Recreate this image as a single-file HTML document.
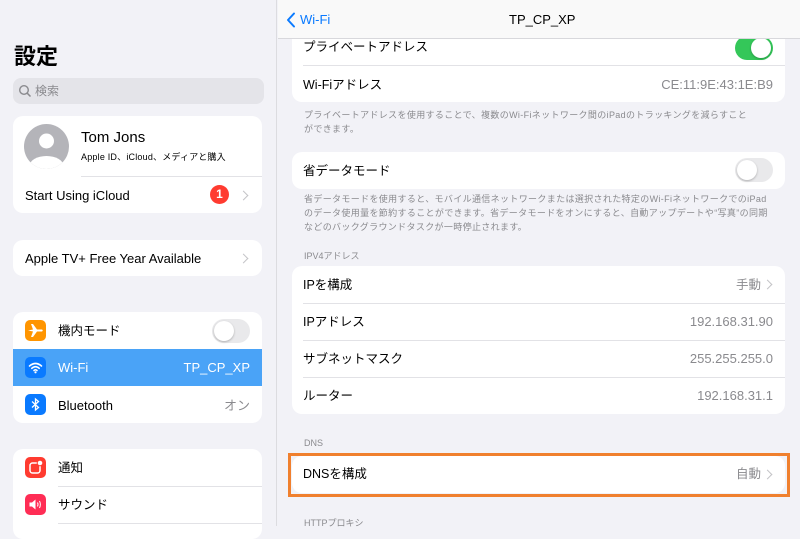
<!DOCTYPE html>
<html><head><meta charset="utf-8">
<style>
*{margin:0;padding:0;box-sizing:border-box}
body{width:800px;height:526px;overflow:hidden;background:#f2f2f7;font-family:"Liberation Sans","Noto Sans CJK JP",sans-serif;color:#000;position:relative}
.a{position:absolute}
.card{position:absolute;background:#fff;border-radius:10px;overflow:hidden}
.t{position:absolute;font-size:13px;line-height:16px;white-space:nowrap}
.g{color:#8a8a8e}
.sep{position:absolute;height:1px;background:#e2e2e6}
.chev{position:absolute;width:7px;height:7px;border-right:1.5px solid #c4c4c7;border-top:1.5px solid #c4c4c7;transform:rotate(45deg)}
.note{position:absolute;font-size:9px;line-height:14px;color:#8a8a8e;left:304px;width:450px;letter-spacing:.35px}
.hdr{position:absolute;font-size:9px;color:#8a8a8e;left:304px}
.ico{position:absolute;left:25px;width:21px;height:21px;border-radius:5px}
.tog{position:absolute;width:38px;height:24px;border-radius:12px;background:#e9e9eb}
.tog i{position:absolute;top:2px;width:20px;height:20px;border-radius:50%;background:#fff;box-shadow:0 1px 2px rgba(0,0,0,.25)}
</style></head><body>
<div class="a" style="left:0;top:0;width:277px;height:526px;background:#f2f2f7;border-right:1px solid #dcdce0"></div>
<div class="t" style="left:14px;top:44px;font-size:22px;line-height:26px;font-weight:bold">設定</div>
<div class="a" style="left:13px;top:78px;width:251px;height:26px;border-radius:8px;background:#e4e4e9"></div>
<svg class="a" style="left:18px;top:84px" width="14" height="14" viewBox="0 0 14 14"><circle cx="6" cy="6" r="4.3" fill="none" stroke="#8a8a8e" stroke-width="1.4"/><path d="M9.2 9.2 L12.5 12.5" stroke="#8a8a8e" stroke-width="1.5"/></svg>
<div class="t g" style="left:35px;top:83px;font-size:12px">検索</div>

<div class="card" style="left:13px;top:116px;width:249px;height:97px"></div>
<svg class="a" style="left:24px;top:124px" width="45" height="45" viewBox="0 0 45 45"><defs><clipPath id="c"><circle cx="22.5" cy="22.5" r="22.5"/></clipPath></defs><circle cx="22.5" cy="22.5" r="22.5" fill="#b4b4b9"/><circle cx="22.5" cy="17" r="7.5" fill="#fff"/><ellipse cx="22.5" cy="42" rx="17" ry="10" fill="#fff" clip-path="url(#c)"/></svg>
<div class="t" style="left:81px;top:129px;font-size:15px;line-height:17px">Tom Jons</div>
<div class="t" style="left:81px;top:151px;font-size:9px;line-height:12px;letter-spacing:.2px">Apple ID、iCloud、メディアと購入</div>
<div class="sep" style="left:81px;top:176px;width:181px"></div>
<div class="t" style="left:25px;top:188px">Start Using iCloud</div>
<div class="a" style="left:210px;top:185px;width:19px;height:19px;border-radius:50%;background:#ff3b30;color:#fff;font-size:12px;font-weight:bold;text-align:center;line-height:19px">1</div>
<div class="chev" style="left:240px;top:192px"></div>

<div class="card" style="left:13px;top:240px;width:249px;height:36px"></div>
<div class="t" style="left:25px;top:251px">Apple TV+ Free Year Available</div>
<div class="chev" style="left:240px;top:255px"></div>

<div class="card" style="left:13px;top:312px;width:249px;height:111px"></div>
<div class="a" style="left:13px;top:349px;width:249px;height:37px;background:#4aa3f7"></div>
<div class="ico" style="top:320px;background:#ff9500"><svg width="21" height="21" viewBox="0 0 21 21"><path d="M3 10.5 L8 9.5 L6 4 L8 4 L12 9.5 L17 9.5 Q18.5 10.5 17 11.5 L12 11.5 L8 17 L6 17 L8 11.5 L3 10.5Z" fill="#fff"/></svg></div>
<div class="t" style="left:58px;top:323px;font-size:12.5px">機内モード</div>
<div class="tog" style="left:212px;top:319px"><i style="left:2px"></i></div>
<div class="ico" style="top:357px;background:#0a7aff"><svg width="21" height="21" viewBox="0 0 21 21"><path d="M4.5 9 Q10.5 4 16.5 9 M6.8 11.3 Q10.5 8 14.2 11.3 M9 13.5 Q10.5 12.2 12 13.5" fill="none" stroke="#fff" stroke-width="1.6" stroke-linecap="round"/><circle cx="10.5" cy="15.3" r="1.1" fill="#fff"/></svg></div>
<div class="t" style="left:58px;top:360px;color:#fff">Wi-Fi</div>
<div class="t" style="right:550px;top:360px;color:#fff">TP_CP_XP</div>
<div class="ico" style="top:394px;background:#0a7aff"><svg width="21" height="21" viewBox="0 0 21 21"><path d="M7 7.5 L13.5 13.5 L10.5 16 L10.5 5 L13.5 7.5 L7 13.5" fill="none" stroke="#fff" stroke-width="1.3"/></svg></div>
<div class="t" style="left:58px;top:398px">Bluetooth</div>
<div class="t g" style="right:550px;top:398px">オン</div>

<div class="card" style="left:13px;top:449px;width:249px;height:90px"></div>
<div class="ico" style="top:457px;background:#ff3b30"><svg width="21" height="21" viewBox="0 0 21 21"><rect x="5" y="6" width="10" height="10" rx="2.5" fill="none" stroke="#fff" stroke-width="1.5"/><circle cx="15" cy="6" r="2.8" fill="#fff" stroke="#ff3b30" stroke-width="1"/></svg></div>
<div class="t" style="left:58px;top:460px;font-size:12.5px">通知</div>
<div class="sep" style="left:58px;top:486px;width:204px"></div>
<div class="ico" style="top:494px;background:#ff2d55"><svg width="21" height="21" viewBox="0 0 21 21"><path d="M4.5 8.5 H7 L10.5 5.5 V15.5 L7 12.5 H4.5Z" fill="#fff"/><path d="M12.5 8.5 Q13.5 10.5 12.5 12.5 M14.5 7 Q16.2 10.5 14.5 14" fill="none" stroke="#fff" stroke-width="1"/></svg></div>
<div class="t" style="left:58px;top:497px;font-size:12.5px">サウンド</div>
<div class="sep" style="left:58px;top:523px;width:204px"></div>

<div class="card" style="left:292px;top:20px;width:493px;height:82px"></div>
<div class="t" style="left:303px;top:39px;font-size:12.5px">プライベートアドレス</div>
<div class="tog" style="left:735px;top:36px;background:#34c759"><i style="left:16px"></i></div>
<div class="sep" style="left:303px;top:65px;width:482px"></div>
<div class="t" style="left:303px;top:77px;font-size:12.5px">Wi-Fiアドレス</div>
<div class="t g" style="right:27px;top:77px">CE:11:9E:43:1E:B9</div>
<div class="note" style="top:108px">プライベートアドレスを使用することで、複数のWi-Fiネットワーク間のiPadのトラッキングを減らすことができます。</div>

<div class="card" style="left:292px;top:152px;width:493px;height:37px"></div>
<div class="t" style="left:303px;top:163px;font-size:12.5px">省データモード</div>
<div class="tog" style="left:735px;top:158px"><i style="left:2px"></i></div>
<div class="note" style="top:192px;width:470px">省データモードを使用すると、モバイル通信ネットワークまたは選択された特定のWi-FiネットワークでのiPadのデータ使用量を節約することができます。省データモードをオンにすると、自動アップデートや“写真”の同期などのバックグラウンドタスクが一時停止されます。</div>

<div class="hdr" style="top:249px">IPV4アドレス</div>
<div class="card" style="left:292px;top:266px;width:493px;height:148px"></div>
<div class="t" style="left:303px;top:277px;font-size:12.5px">IPを構成</div>
<div class="t g" style="left:736px;top:277px;font-size:12.5px">手動</div>
<div class="chev" style="left:764px;top:281px"></div>
<div class="sep" style="left:303px;top:303px;width:482px"></div>
<div class="t" style="left:303px;top:314px;font-size:12.5px">IPアドレス</div>
<div class="t g" style="right:27px;top:314px">192.168.31.90</div>
<div class="sep" style="left:303px;top:340px;width:482px"></div>
<div class="t" style="left:303px;top:351px;font-size:12.5px">サブネットマスク</div>
<div class="t g" style="right:27px;top:351px">255.255.255.0</div>
<div class="sep" style="left:303px;top:377px;width:482px"></div>
<div class="t" style="left:303px;top:388px;font-size:12.5px">ルーター</div>
<div class="t g" style="right:27px;top:388px">192.168.31.1</div>

<div class="hdr" style="top:438px">DNS</div>
<div class="card" style="left:292px;top:456px;width:493px;height:37px"></div>
<div class="a" style="left:288px;top:453px;width:502px;height:44px;border:3px solid #f0802e"></div>
<div class="t" style="left:303px;top:466px;font-size:12.5px">DNSを構成</div>
<div class="t g" style="left:736px;top:466px;font-size:12.5px">自動</div>
<div class="chev" style="left:764px;top:471px"></div>
<div class="hdr" style="top:516px">HTTPプロキシ</div>

<div class="a" style="left:278px;top:0;width:522px;height:39px;background:#f9f9f9;border-bottom:1px solid #d8d8dc"></div>
<svg class="a" style="left:286px;top:12px" width="10" height="16" viewBox="0 0 10 16"><path d="M8 1.5 L2 8 L8 14.5" fill="none" stroke="#0a7aff" stroke-width="2" stroke-linecap="round" stroke-linejoin="round"/></svg>
<div class="t" style="left:300px;top:12px;font-size:13px;color:#0a7aff">Wi-Fi</div>
<div class="t" style="left:509px;top:12px;font-size:13px">TP_CP_XP</div>
</body></html>
